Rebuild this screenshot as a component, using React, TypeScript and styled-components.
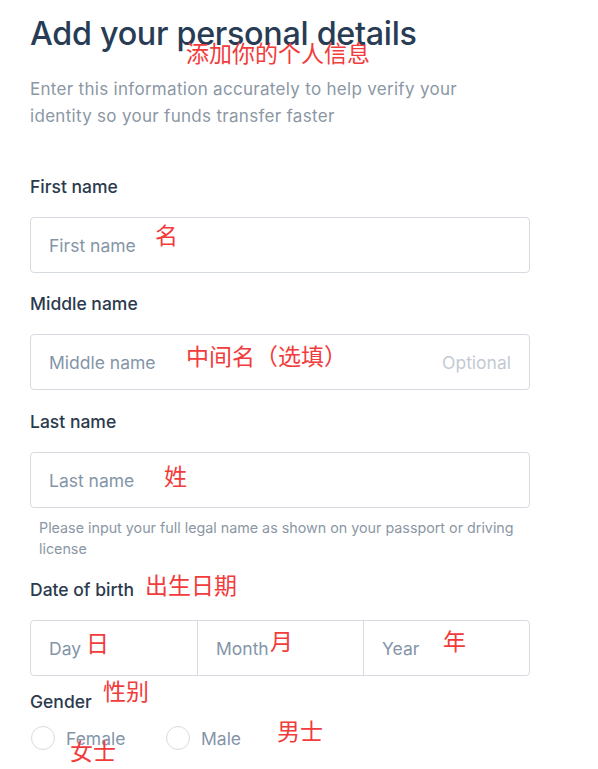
import styled, { createGlobalStyle } from 'styled-components';

// Personal details form with red translation notes laid over it.

const GlobalStyle = createGlobalStyle`
  html, body {
    margin: 0;
    padding: 0;
    background: #ffffff;
  }
  body {
    font-family: Inter, "Noto Sans", sans-serif;
    -webkit-font-smoothing: antialiased;
  }
`;

const Page = styled.div`
  position: relative;
  width: 598px;
  min-height: 769px;
  box-sizing: border-box;
  padding: 14px 0 0 30px;
  overflow: hidden;
`;

const Form = styled.div`
  width: 500px;
  display: flex;
  flex-direction: column;
`;

const Title = styled.h1`
  margin: 0;
  font-size: 32.3px;
  font-weight: 500;
  line-height: 40px;
  letter-spacing: -0.3px;
  color: #283c55;
`;

const Subtitle = styled.p`
  margin: 22px 0 0;
  width: 450px;
  font-size: 17px;
  line-height: 27px;
  letter-spacing: 0.3px;
  color: #8b97a5;
`;

const Field = styled.div<{ $top: number }>`
  margin-top: ${(p) => p.$top}px;
  display: flex;
  flex-direction: column;
`;

const Label = styled.label`
  font-size: 17.5px;
  font-weight: 500;
  line-height: 20px;
  color: #2b3a4d;
`;

const InputBox = styled.div`
  margin-top: 20px;
  height: 56px;
  box-sizing: border-box;
  border: 1px solid #d6dbe1;
  border-radius: 4px;
  display: flex;
  align-items: center;
  padding: 0 18px;
`;

const Placeholder = styled.span`
  flex: 1;
  font-size: 17.5px;
  color: #8495a8;
`;

const Optional = styled.span`
  font-size: 17.5px;
  color: #c3cad3;
`;

const Hint = styled.p`
  margin: 9px 0 0 9px;
  font-size: 14.3px;
  line-height: 21px;
  color: #8b97a5;
`;

const DateBox = styled.div`
  margin-top: 20px;
  height: 56px;
  box-sizing: border-box;
  border: 1px solid #d6dbe1;
  border-radius: 4px;
  display: grid;
  grid-template-columns: repeat(3, 1fr);
`;

const DatePart = styled.div`
  display: flex;
  align-items: center;
  padding: 0 18px;
  font-size: 17.5px;
  color: #8495a8;
  & + & {
    border-left: 1px solid #d6dbe1;
  }
`;

const RadioRow = styled.div`
  margin-top: 14px;
  display: flex;
`;

const RadioOption = styled.label`
  display: flex;
  align-items: center;
  gap: 11px;
  width: 135px;
  font-size: 17.5px;
  color: #8495a8;
`;

const RadioCircle = styled.span`
  width: 24px;
  height: 24px;
  box-sizing: border-box;
  border: 1px solid #d6dbe1;
  border-radius: 50%;
  margin-left: 1px;
`;

const Note = styled.span<{ $x: number; $y: number }>`
  position: absolute;
  left: ${(p) => p.$x}px;
  top: ${(p) => p.$y}px;
  font-family: "Noto Sans CJK SC", sans-serif;
  font-size: 23px;
  line-height: 26px;
  color: #f23b3b;
  white-space: nowrap;
  pointer-events: none;
`;

const notes = [
  { text: '添加你的个人信息', x: 186, y: 39 },
  { text: '名', x: 155, y: 221 },
  { text: '中间名（选填）', x: 186, y: 342 },
  { text: '姓', x: 164, y: 462 },
  { text: '出生日期', x: 145, y: 571 },
  { text: '日', x: 86, y: 629 },
  { text: '月', x: 270, y: 627 },
  { text: '年', x: 443, y: 627 },
  { text: '性别', x: 103, y: 677 },
  { text: '男士', x: 277, y: 717 },
  { text: '女士', x: 70, y: 737 },
];

export default function App() {
  return (
    <>
      <GlobalStyle />
      <Page>
        <Form>
          <Title>Add your personal details</Title>
          <Subtitle>
            Enter this information accurately to help verify your identity so your funds transfer faster
          </Subtitle>

          <Field $top={47}>
            <Label>First name</Label>
            <InputBox>
              <Placeholder>First name</Placeholder>
            </InputBox>
          </Field>

          <Field $top={21}>
            <Label>Middle name</Label>
            <InputBox>
              <Placeholder>Middle name</Placeholder>
              <Optional>Optional</Optional>
            </InputBox>
          </Field>

          <Field $top={22}>
            <Label>Last name</Label>
            <InputBox>
              <Placeholder>Last name</Placeholder>
            </InputBox>
            <Hint>Please input your full legal name as shown on your passport or driving license</Hint>
          </Field>

          <Field $top={21}>
            <Label>Date of birth</Label>
            <DateBox>
              <DatePart>Day</DatePart>
              <DatePart>Month</DatePart>
              <DatePart>Year</DatePart>
            </DateBox>
          </Field>

          <Field $top={16}>
            <Label>Gender</Label>
            <RadioRow>
              <RadioOption>
                <RadioCircle />
                Female
              </RadioOption>
              <RadioOption>
                <RadioCircle />
                Male
              </RadioOption>
            </RadioRow>
          </Field>
        </Form>

        {notes.map((n) => (
          <Note key={n.text} $x={n.x} $y={n.y}>
            {n.text}
          </Note>
        ))}
      </Page>
    </>
  );
}
